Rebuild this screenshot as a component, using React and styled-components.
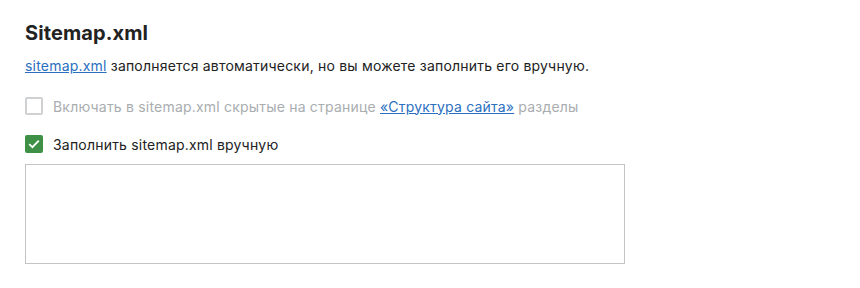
import styled, { createGlobalStyle } from "styled-components";

const GlobalStyle = createGlobalStyle`
  body {
    margin: 0;
    background: #ffffff;
    font-family: Inter, Roboto, "Noto Sans", sans-serif;
    color: #222222;
  }
`;

const Section = styled.section`
  padding: 19px 25px;
  width: 600px;
`;

const Title = styled.h2`
  margin: 0 0 9px;
  font-size: 20px;
  line-height: 28px;
  font-weight: 700;
  letter-spacing: 0.1px;
  color: #222222;
`;

const Text = styled.p`
  margin: 0 0 20px;
  font-size: 14px;
  line-height: 20px;
  letter-spacing: 0.2px;
`;

const Link = styled.a`
  color: #2a6fc0;
  text-decoration: underline;
`;

const Option = styled.label`
  display: flex;
  align-items: center;
  gap: 10px;
  height: 20px;
  margin-bottom: 18px;
  font-size: 14px;
  letter-spacing: 0.2px;
  color: ${(p) => (p.disabled ? "#a9adb0" : "#222222")};
`;

const Box = styled.span`
  width: 18px;
  height: 18px;
  box-sizing: border-box;
  border-radius: 2px;
  display: flex;
  align-items: center;
  justify-content: center;
  flex-shrink: 0;
  background: ${(p) => (p.checked ? "#3d9046" : "#ffffff")};
  border: ${(p) => (p.checked ? "none" : "2px solid #cfd1d3")};
`;

const Area = styled.textarea`
  display: block;
  width: 600px;
  height: 100px;
  box-sizing: border-box;
  border: 1px solid #c4c4c4;
  border-radius: 0;
  resize: none;
  margin-top: -8px;
`;

const Check = () => (
  <svg width="12" height="10" viewBox="0 0 12 10">
    <path d="M1.2 5.2 L4.4 8.2 L10.8 1.6" fill="none" stroke="#ffffff" strokeWidth="1.8" />
  </svg>
);

export default function App() {
  return (
    <>
      <GlobalStyle />
      <Section>
        <Title>Sitemap.xml</Title>
        <Text>
          <Link href="#">sitemap.xml</Link> заполняется автоматически, но вы можете заполнить его вручную.
        </Text>
        <Option disabled>
          <Box />
          <span>
            Включать в sitemap.xml скрытые на странице <Link href="#">«Структура сайта»</Link> разделы
          </span>
        </Option>
        <Option>
          <Box checked>
            <Check />
          </Box>
          <span>Заполнить sitemap.xml вручную</span>
        </Option>
        <Area />
      </Section>
    </>
  );
}
